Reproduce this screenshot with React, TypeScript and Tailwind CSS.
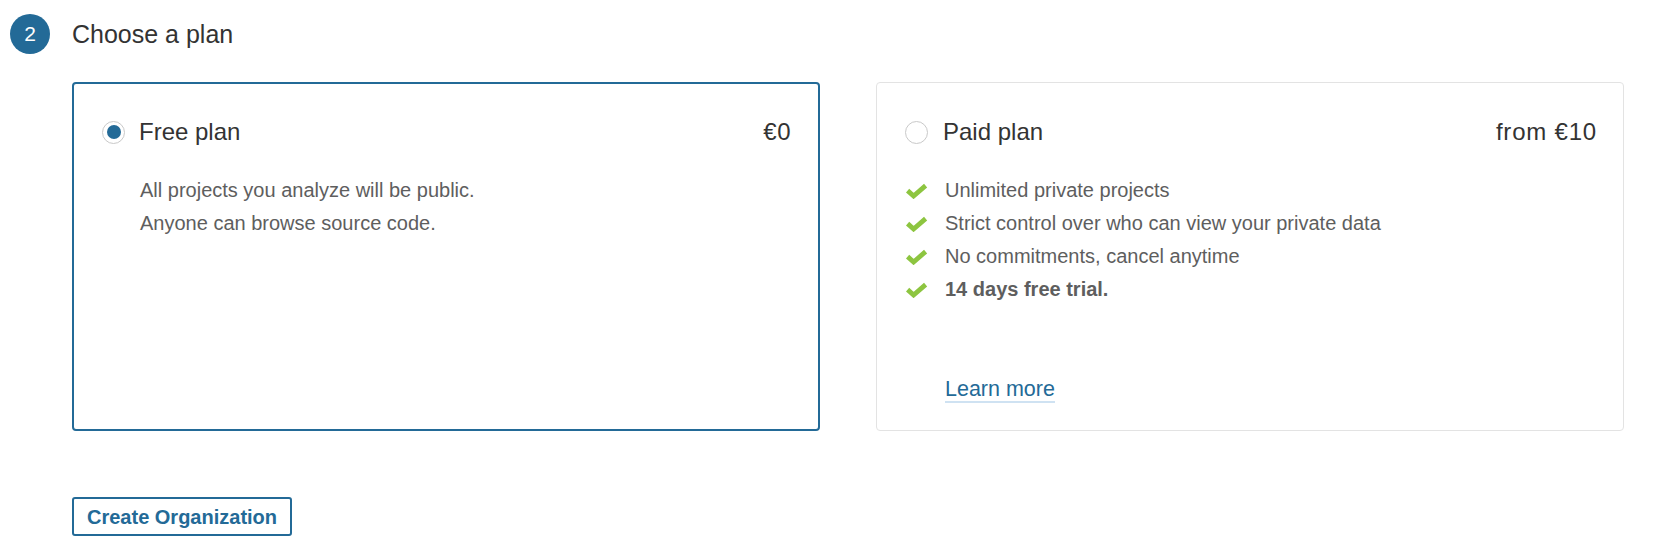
import React from "react";

const font = { fontFamily: '"Liberation Sans", Arial, Helvetica, sans-serif' };

function Check() {
  return (
    <svg width="23" height="16" viewBox="0 0 23 16" className="shrink-0">
      <path d="M2.6 7.6 L8.6 13 L20.6 2.6" fill="none" stroke="#8dc540" strokeWidth="4.8" strokeLinecap="butt" strokeLinejoin="miter" strokeMiterlimit="3" />
    </svg>
  );
}

function Radio({ checked }: { checked?: boolean }) {
  return (
    <span className="flex h-[23px] w-[23px] shrink-0 items-center justify-center rounded-full border border-[#c9c9c9] bg-white">
      {checked && <span className="h-[14px] w-[14px] rounded-full bg-[#236a97]" />}
    </span>
  );
}

const perks = [
  "Unlimited private projects",
  "Strict control over who can view your private data",
  "No commitments, cancel anytime",
];

export default function App() {
  return (
    <div className="h-[546px] w-[1672px] bg-white text-[#333]" style={font}>
      <div className="flex items-center pl-[10px] pt-[14px]">
        <span className="flex h-[40px] w-[40px] items-center justify-center rounded-full bg-[#236a97] text-[21px] text-white">
          2
        </span>
        <h2 className="ml-[22px] text-[25px] leading-[40px] text-[#333]">Choose a plan</h2>
      </div>

      <div className="ml-[72px] mt-[28px] grid w-[1552px] grid-cols-2 gap-[56px]">
        <div className="flex h-[349px] flex-col rounded-[4px] border-2 border-[#236a97] pl-[28px] pr-[27px] pt-[30px]">
          <div className="flex h-[36px] items-center">
            <Radio checked />
            <span className="ml-[14px] text-[24px]">Free plan</span>
            <span className="ml-auto text-[24px] tracking-[0.5px]">€0</span>
          </div>
          <div className="ml-[38px] mt-[24px] text-[20px] leading-[33px] text-[#5e5e5e]">
            <p>All projects you analyze will be public.</p>
            <p>Anyone can browse source code.</p>
          </div>
        </div>

        <div className="flex h-[349px] flex-col rounded-[4px] border border-[#e3e3e3] pl-[28px] pr-[26px] pt-[31px] pb-[27px]">
          <div className="flex h-[36px] items-center">
            <Radio />
            <span className="ml-[15px] text-[24px]">Paid plan</span>
            <span className="ml-auto text-[24px] tracking-[0.8px]">from €10</span>
          </div>
          <ul className="mt-[24px] text-[20px] leading-[33px] text-[#5e5e5e]">
            {perks.map((p) => (
              <li key={p} className="flex items-center gap-[17px]">
                <Check />
                <span>{p}</span>
              </li>
            ))}
            <li className="flex items-center gap-[17px]">
              <Check />
              <span className="font-bold">14 days free trial.</span>
            </li>
          </ul>
          <div className="mt-auto pl-[40px]">
            <a href="#" className="border-b-2 border-[#cfe2f2] text-[21.5px] leading-[25px] text-[#236a97] no-underline">
              Learn more
            </a>
          </div>
        </div>
      </div>

      <div className="ml-[72px] mt-[66px]">
        <button className="h-[39px] rounded-[3px] border-2 border-[#236a97] bg-white px-[13px] text-[20px] font-bold text-[#236a97]">
          Create Organization
        </button>
      </div>
    </div>
  );
}
